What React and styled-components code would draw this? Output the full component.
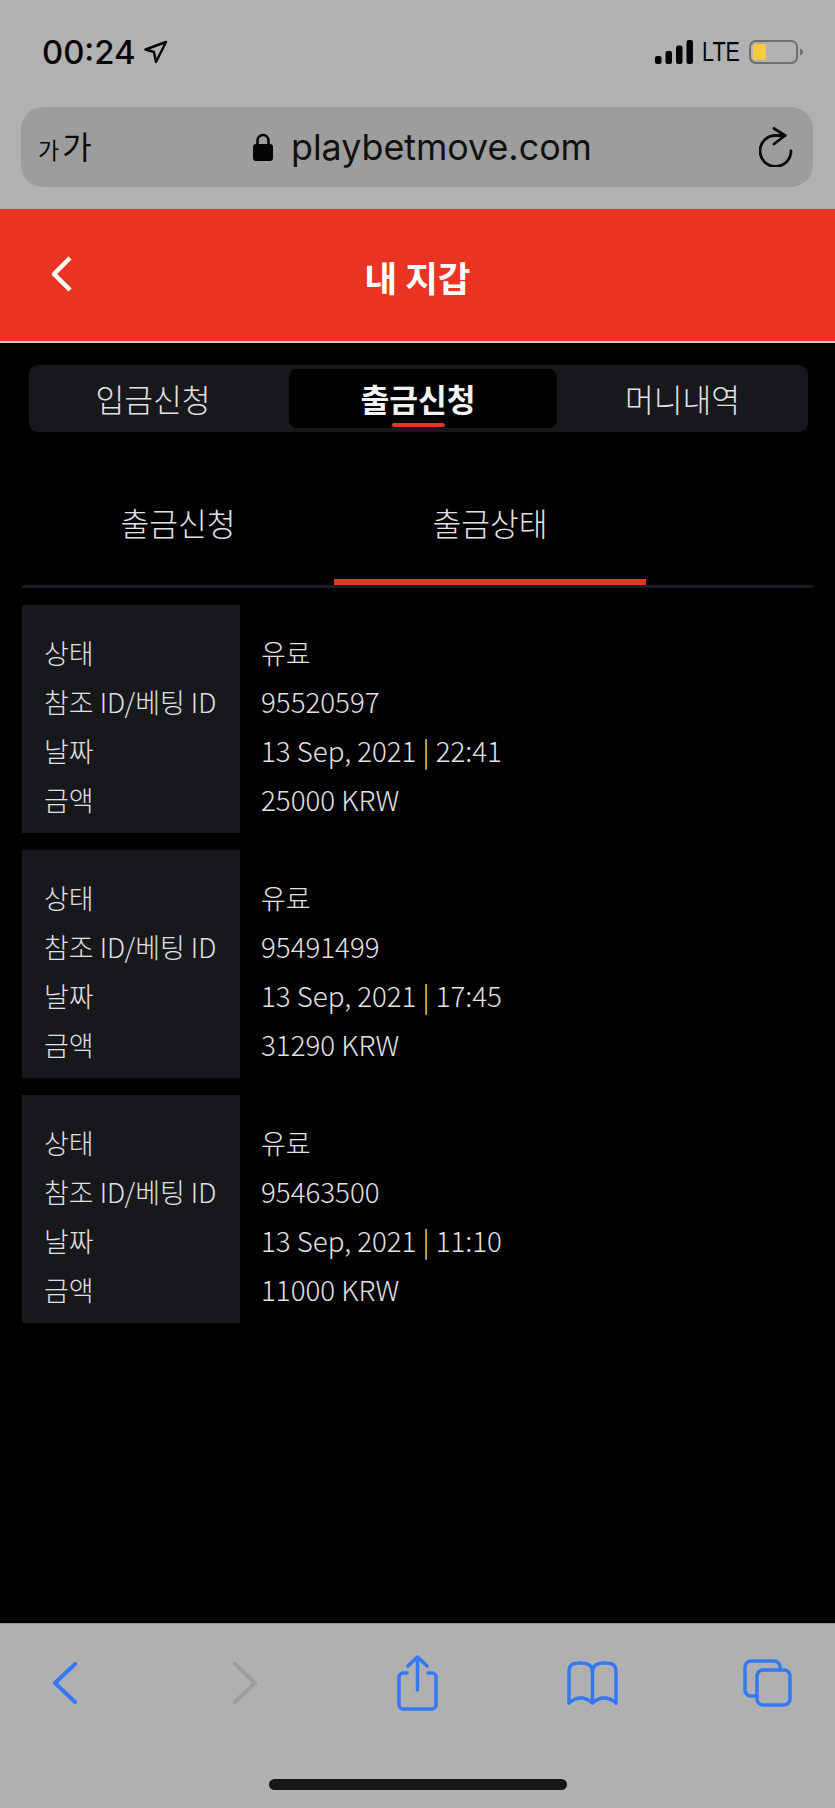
import styled, { createGlobalStyle } from "styled-components";

const GlobalStyle = createGlobalStyle`
  html, body {
    margin: 0;
    padding: 0;
    background: #000;
  }
  * {
    box-sizing: border-box;
  }
`;

const Page = styled.div`
  width: 835px;
  height: 1808px;
  display: flex;
  flex-direction: column;
  background: #000;
  font-family: "Noto Sans CJK KR", "Noto Sans", sans-serif;
  overflow: hidden;
`;

const BrowserTop = styled.div`
  height: 209px;
  padding-top: 28px;
  background: #b1b1b1;
`;

const StatusBar = styled.div`
  height: 48px;
  padding: 0 32px 0 42px;
  display: flex;
  align-items: center;
  justify-content: space-between;
  color: #050505;
`;

const StatusGroup = styled.div`
  display: flex;
  align-items: center;
  gap: ${(p) => p.$gap}px;
`;

const Time = styled.span`
  font-family: Inter, sans-serif;
  font-weight: 500;
  font-size: 32.8px;
  line-height: 48px;
`;

const Lte = styled.span`
  width: 38px;
  display: flex;
  justify-content: center;
  font-family: "Liberation Sans", sans-serif;
  font-size: 27px;
  line-height: 48px;
  transform: scaleX(0.8);
`;

const UrlBar = styled.div`
  width: 792px;
  height: 80px;
  margin: 31px 0 0 21px;
  border-radius: 22px;
  background: #9d9d9d;
  display: grid;
  grid-template-columns: 232px 506px 1fr;
  align-items: center;
  color: #0a0a0a;
`;

const TextSize = styled.div`
  padding-left: 17px;
  display: flex;
  align-items: baseline;
  gap: 3px;
`;

const TextSizeChar = styled.span`
  font-size: ${(p) => p.$size}px;
  line-height: 40px;
`;

const UrlCenter = styled.div`
  display: flex;
  align-items: center;
  gap: 18px;
`;

const UrlText = styled.span`
  font-family: Inter, sans-serif;
  font-size: 35.8px;
  line-height: 80px;
  color: #111;
`;

const Header = styled.header`
  height: 134px;
  background: #ea3423;
  border-bottom: 2px solid #c9c9c9;
  display: grid;
  grid-template-columns: 1fr auto 1fr;
  align-items: center;
`;

const BackLink = styled.div`
  display: flex;
  padding-left: 50px;
  margin-top: -3px;
`;

const Title = styled.h1`
  margin: 4px 0 0;
  text-align: center;
  color: #fff;
  font-size: 35.5px;
  font-weight: 700;
  line-height: 50px;
`;

const Content = styled.main`
  flex: 1;
  padding-top: 22px;
`;

const Segment = styled.div`
  width: 779px;
  height: 67px;
  margin-left: 29px;
  padding: 4px 0;
  border-radius: 9px;
  background: #16181c;
  display: grid;
  grid-template-columns: 248px 280px 251px;
`;

const SegmentItem = styled.div`
  position: relative;
  margin-left: ${(p) => (p.$active ? 12 : 0)}px;
  padding-right: ${(p) => (p.$active ? 10 : 0)}px;
  border-radius: 8px;
  background: ${(p) => (p.$active ? "#000" : "transparent")};
  color: ${(p) => (p.$active ? "#f2f2f2" : "#e2e2e2")};
  font-size: 31.3px;
  font-weight: ${(p) => (p.$active ? 700 : 300)};
  line-height: 59px;
  text-align: center;
`;

const SegmentMark = styled.span`
  position: absolute;
  left: 103px;
  bottom: 1px;
  width: 53px;
  height: 4px;
  border-radius: 2px;
  background: #ea3423;
`;

const Tabs = styled.div`
  width: 791px;
  height: 156px;
  margin-left: 22px;
  display: flex;
  border-bottom: 3px solid #1a1c24;
`;

const Tab = styled.div`
  width: 312px;
  padding-top: 68px;
  color: #e2e2e2;
  font-size: 31.3px;
  font-weight: 300;
  line-height: 46px;
  text-align: center;
  border-bottom: 6px solid ${(p) => (p.$active ? "#ea3423" : "transparent")};
`;

const List = styled.div`
  margin: 17px 0 0 22px;
  display: flex;
  flex-direction: column;
  gap: 17px;
`;

const Card = styled.div`
  height: 228px;
  display: grid;
  grid-template-columns: 218px 1fr;
`;

const Column = styled.div`
  padding: 23px 0 7px ${(p) => p.$left}px;
  background: ${(p) => (p.$shaded ? "#16181c" : "transparent")};
`;

const Line = styled.div`
  height: 49px;
  color: #e2e2e2;
  font-size: ${(p) => p.$size}px;
  font-weight: 300;
  line-height: 49px;
  white-space: nowrap;
`;

const BrowserBottom = styled.div`
  height: 185px;
  background: #b0b0b0;
  border-top: 1px solid #8f8f8f;
  padding-top: 29px;
`;

const IconRow = styled.div`
  height: 60px;
  padding-left: 53px;
  display: grid;
  grid-template-columns: 180px 162px 172px 176px 1fr;
  align-items: center;
`;

const HomeIndicator = styled.div`
  width: 298px;
  height: 11px;
  margin: 66px 0 0 269px;
  border-radius: 6px;
  background: #161616;
`;

const Icon = styled.svg`
  display: block;
  fill: none;
  stroke: ${(p) => p.$color || "#3478f6"};
  stroke-width: ${(p) => p.$stroke || 3.5}px;
  stroke-linecap: round;
  stroke-linejoin: round;
`;

const records = [
  { id: "95520597", date: "13 Sep, 2021 | 22:41", amount: "25000 KRW" },
  { id: "95491499", date: "13 Sep, 2021 | 17:45", amount: "31290 KRW" },
  { id: "95463500", date: "13 Sep, 2021 | 11:10", amount: "11000 KRW" },
];

const labels = ["상태", "참조 ID/베팅 ID", "날짜", "금액"];

const App = () => {
  return (
    <Page>
      <GlobalStyle />
      <BrowserTop>
        <StatusBar>
          <StatusGroup $gap={8}>
            <Time>00:24</Time>
            <Icon width="24" height="24" viewBox="0 0 24 24" $color="#050505" $stroke={2.4}>
              <path d="M1.500 9.500 22 2 12 22 10 12Z" />
            </Icon>
          </StatusGroup>
          <StatusGroup $gap={9}>
            <svg width="38" height="24" viewBox="0 0 38 24">
              <rect x="0" y="16" width="6.5" height="8" rx="2" fill="#050505" />
              <rect x="10.5" y="11" width="6.5" height="13" rx="2" fill="#050505" />
              <rect x="21" y="5.5" width="6.5" height="18.5" rx="2" fill="#050505" />
              <rect x="31.5" y="0" width="6.5" height="24" rx="2" fill="#050505" />
            </svg>
            <Lte>LTE</Lte>
            <svg width="54" height="24" viewBox="0 0 54 24">
              <rect x="1" y="1" width="47" height="22" rx="6" fill="none" stroke="#6f6f6f" strokeWidth="2" />
              <rect x="4" y="4" width="13" height="16" rx="2.5" fill="#f7cb3f" />
              <path d="M51 8.5c2 .6 3 2 3 3.5s-1 2.900-3 3.500z" fill="#6f6f6f" />
            </svg>
          </StatusGroup>
        </StatusBar>
        <UrlBar>
          <TextSize>
            <TextSizeChar $size={23}>가</TextSizeChar>
            <TextSizeChar $size={32}>가</TextSizeChar>
          </TextSize>
          <UrlCenter>
            <svg width="20" height="28" viewBox="0 0 20 28">
              <path d="M4.500 13V7.500a5.500 5.500 0 0 1 11 0V13" fill="none" stroke="#050505" strokeWidth="2.600" />
              <rect x="0" y="11" width="20" height="17" rx="3" fill="#050505" />
            </svg>
            <UrlText>playbetmove.com</UrlText>
          </UrlCenter>
          <Icon width="34" height="40" viewBox="0 0 34 40" $color="#0a0a0a" $stroke={2.800}>
            <path d="M26 8.500H16.500A15.500 15.500 0 1 0 32 24" />
            <path d="M15 1.500 26 8.500 15 17" />
          </Icon>
        </UrlBar>
      </BrowserTop>

      <Header>
        <BackLink>
          <svg width="22" height="36" viewBox="0 0 22 36">
            <path d="M20 2 4 18 20 34" fill="none" stroke="#fff" strokeWidth="4.500" strokeLinejoin="round" />
          </svg>
        </BackLink>
        <Title>내 지갑</Title>
        <span />
      </Header>

      <Content>
        <Segment>
          <SegmentItem>입금신청</SegmentItem>
          <SegmentItem $active>
            출금신청
            <SegmentMark />
          </SegmentItem>
          <SegmentItem>머니내역</SegmentItem>
        </Segment>

        <Tabs>
          <Tab>출금신청</Tab>
          <Tab $active>출금상태</Tab>
        </Tabs>

        <List>
          {records.map((record) => (
            <Card key={record.id}>
              <Column $shaded $left={22}>
                {labels.map((label) => (
                  <Line key={label} $size={27}>
                    {label}
                  </Line>
                ))}
              </Column>
              <Column $left={21}>
                <Line $size={27}>유료</Line>
                <Line $size={27.7}>{record.id}</Line>
                <Line $size={27.7}>{record.date}</Line>
                <Line $size={27.7}>{record.amount}</Line>
              </Column>
            </Card>
          ))}
        </List>
      </Content>

      <BrowserBottom>
        <IconRow>
          <Icon width="24" height="42" viewBox="0 0 24 42" $stroke={4}>
            <path d="M22 2 2 21 22 40" />
          </Icon>
          <Icon width="24" height="42" viewBox="0 0 24 42" $color="#9c9c9c" $stroke={4}>
            <path d="M2 2 22 21 2 40" />
          </Icon>
          <Icon width="45" height="56" viewBox="0 0 45 56">
            <path d="M12 18H8a4 4 0 0 0-4 4v28a4 4 0 0 0 4 4h29a4 4 0 0 0 4-4V22a4 4 0 0 0-4-4h-4" />
            <path d="M22.500 35V2M13 11l9.500-9L32 11" />
          </Icon>
          <Icon width="51" height="46" viewBox="0 0 51 46">
            <path d="M2 43V11Q2 3 11 3Q25 2 25.500 11V43" />
            <path d="M49 43V11Q49 3 40 3Q26 2 25.500 11" />
            <path d="M2 43Q14 33 25.500 43Q37 33 49 43" />
          </Icon>
          <Icon width="49" height="48" viewBox="0 0 49 48">
            <path d="M13 37H8a6 6 0 0 1-6-6V8a6 6 0 0 1 6-6h23a6 6 0 0 1 6 6v3" />
            <rect x="14" y="11" width="33" height="35" rx="6" />
          </Icon>
        </IconRow>
        <HomeIndicator />
      </BrowserBottom>
    </Page>
  );
};

export default App;
